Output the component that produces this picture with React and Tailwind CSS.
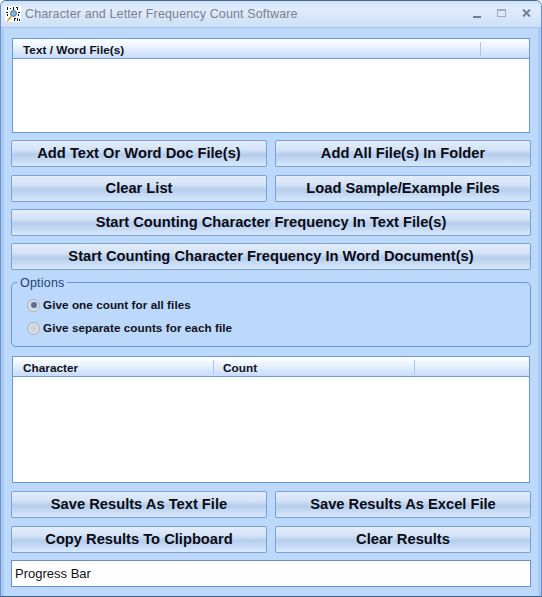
const btn = "h-[27px] flex items-center justify-center rounded-[2px] border border-[#7f9fd0] bg-[linear-gradient(180deg,#e4eefb_0%,#d3e2f6_35%,#b5cdec_55%,#c4d9f3_75%,#d9e9fd_100%)] text-[14.7px] font-bold text-[#0a0a14] whitespace-nowrap";
const head = "bg-[linear-gradient(180deg,#ffffff_0%,#f0f6fe_30%,#c6dcf9_100%)]";
const headText = "text-[11.8px] leading-[14px] font-bold text-[#10101a] pt-[3px]";

function Btn({ children, className = "" }) {
  return <div className={`${btn} ${className}`}>{children}</div>;
}

function Radio({ checked, label }) {
  return (
    <div className="flex items-center gap-[3px] h-[14px]">
      <span className="w-[13px] h-[13px] rounded-full border border-[#a7aeb9] bg-[radial-gradient(circle,#c9ced6_0%,#d6dae1_55%,#f4f5f8_100%)] flex items-center justify-center">
        {checked && <span className="w-[6px] h-[6px] rounded-full bg-[#5a6e92]" />}
      </span>
      <span className="text-[11.7px] font-bold text-[#10101a] tracking-[0.06px]">{label}</span>
    </div>
  );
}

export default function App() {
  return (
    <div className="w-[542px] h-[597px] overflow-hidden flex flex-col bg-[#bcd8fb] border border-[#4a6a92] border-l-[#6a8fc9] border-r-[#6a8fc9] border-b-[#3f5f86] rounded-t-[6px] font-['Liberation_Sans',Arial,sans-serif]">
      <div className="h-[27px] shrink-0 flex items-center pl-[4px] pr-[10px] border-b border-[#a5c8ee] bg-[linear-gradient(180deg,#cfe2f8_0%,#e0ecfb_30%,#cde0f7_100%)]">
        <svg width="16" height="16" viewBox="0 0 16 16" className="shrink-0">
          <rect x="0" y="0" width="16" height="16" fill="#fff" />
          <path d="M2 1h1v3H2zM5 2h1v1H5zM8 1h1v3H8zM11 1h2v1h-2zM12 2h1v2h-1zM1 6h2v1H1zM2 8h1v2H2zM13 6h2v1h-2zM13 8h1v2h-1zM9 12h2v1H9zM9 13h1v2H9zM12 12h1v3h-1zM14 13h1v2h-1z" fill="#111" />
          <circle cx="8.5" cy="7.5" r="3" fill="#7fb2d6" stroke="#4a6f94" strokeWidth="1" />
          <path d="M1.5 15l4-5 1.5 1.5-5 4.5z" fill="#d79a3a" />
        </svg>
        <span className="ml-[4px] text-[12.5px] text-[#7b7f92] tracking-[0.13px] whitespace-nowrap">Character and Letter Frequency Count Software</span>
        <div className="ml-auto flex items-center gap-[16px] pb-[2px]">
          <span className="w-[8px] h-[2px] mt-[7px] bg-[#6f7f94]" />
          <span className="w-[9px] h-[8px] border border-[#a3aebd] border-t-[2px]" />
          <svg width="9" height="8" viewBox="0 0 9 8"><path d="M1 .5l7 7M8 .5l-7 7" stroke="#6f7f94" strokeWidth="2" /></svg>
        </div>
      </div>

      <div className="flex-1 flex flex-col pl-[10px] pr-[10px] border-x-[3px] border-[#a9cbf3]">
        <div className="mt-[10px] h-[95px] ml-[-2px] mr-[-2px] border border-[#6a97d6] bg-white flex flex-col">
          <div className={`h-[20px] shrink-0 flex items-center border-b border-[#6f9cd9] ${head}`}>
            <span className={`pl-[10px] w-[467px] ${headText}`}>Text / Word File(s)</span>
            <span className="h-[14px] border-l border-[#a9c6ea]" />
          </div>
        </div>

        <div className="mt-[7px] -mx-[3px] grid grid-cols-2 gap-x-[8px] gap-y-[8px]">
          <Btn>Add Text Or Word Doc File(s)</Btn>
          <Btn>Add All File(s) In Folder</Btn>
          <Btn>Clear List</Btn>
          <Btn>Load Sample/Example Files</Btn>
        </div>
        <div className="mt-[7px] -mx-[3px] flex flex-col gap-[7px]">
          <Btn>Start Counting Character Frequency In Text File(s)</Btn>
          <Btn>Start Counting Character Frequency In Word Document(s)</Btn>
        </div>

        <div className="relative mt-[12px] -mx-[3px] h-[65px] rounded-[5px] border border-[#6a97d6] pl-[15px] pt-[15px] flex flex-col gap-[9px]">
          <span className="absolute left-[5px] -top-[7px] px-[3px] bg-[#bcd8fb] text-[12.5px] leading-[14px] text-[#1c3f78] tracking-[0.2px]">Options</span>
          <Radio checked label="Give one count for all files" />
          <Radio label="Give separate counts for each file" />
        </div>

        <div className="mt-[9px] h-[127px] -mx-[2px] border border-[#6a97d6] bg-white flex flex-col">
          <div className={`h-[20px] shrink-0 flex items-center border-b border-[#6f9cd9] ${head}`}>
            <span className={`pl-[10px] w-[200px] ${headText}`}>Character</span>
            <span className="h-[14px] border-l border-[#a9c6ea]" />
            <span className={`pl-[9px] w-[200px] ${headText}`}>Count</span>
            <span className="h-[14px] border-l border-[#a9c6ea]" />
          </div>
        </div>

        <div className="mt-[8px] -mx-[3px] grid grid-cols-2 gap-x-[8px] gap-y-[8px]">
          <Btn>Save Results As Text File</Btn>
          <Btn>Save Results As Excel File</Btn>
          <Btn>Copy Results To Clipboard</Btn>
          <Btn>Clear Results</Btn>
        </div>

        <div className="mt-[7px] -mx-[3px] h-[27px] border border-[#6a8fc9] bg-white flex items-center pl-[3px] pt-[1px] text-[13px] text-[#10101a]">Progress Bar</div>
      </div>
    </div>
  );
}
